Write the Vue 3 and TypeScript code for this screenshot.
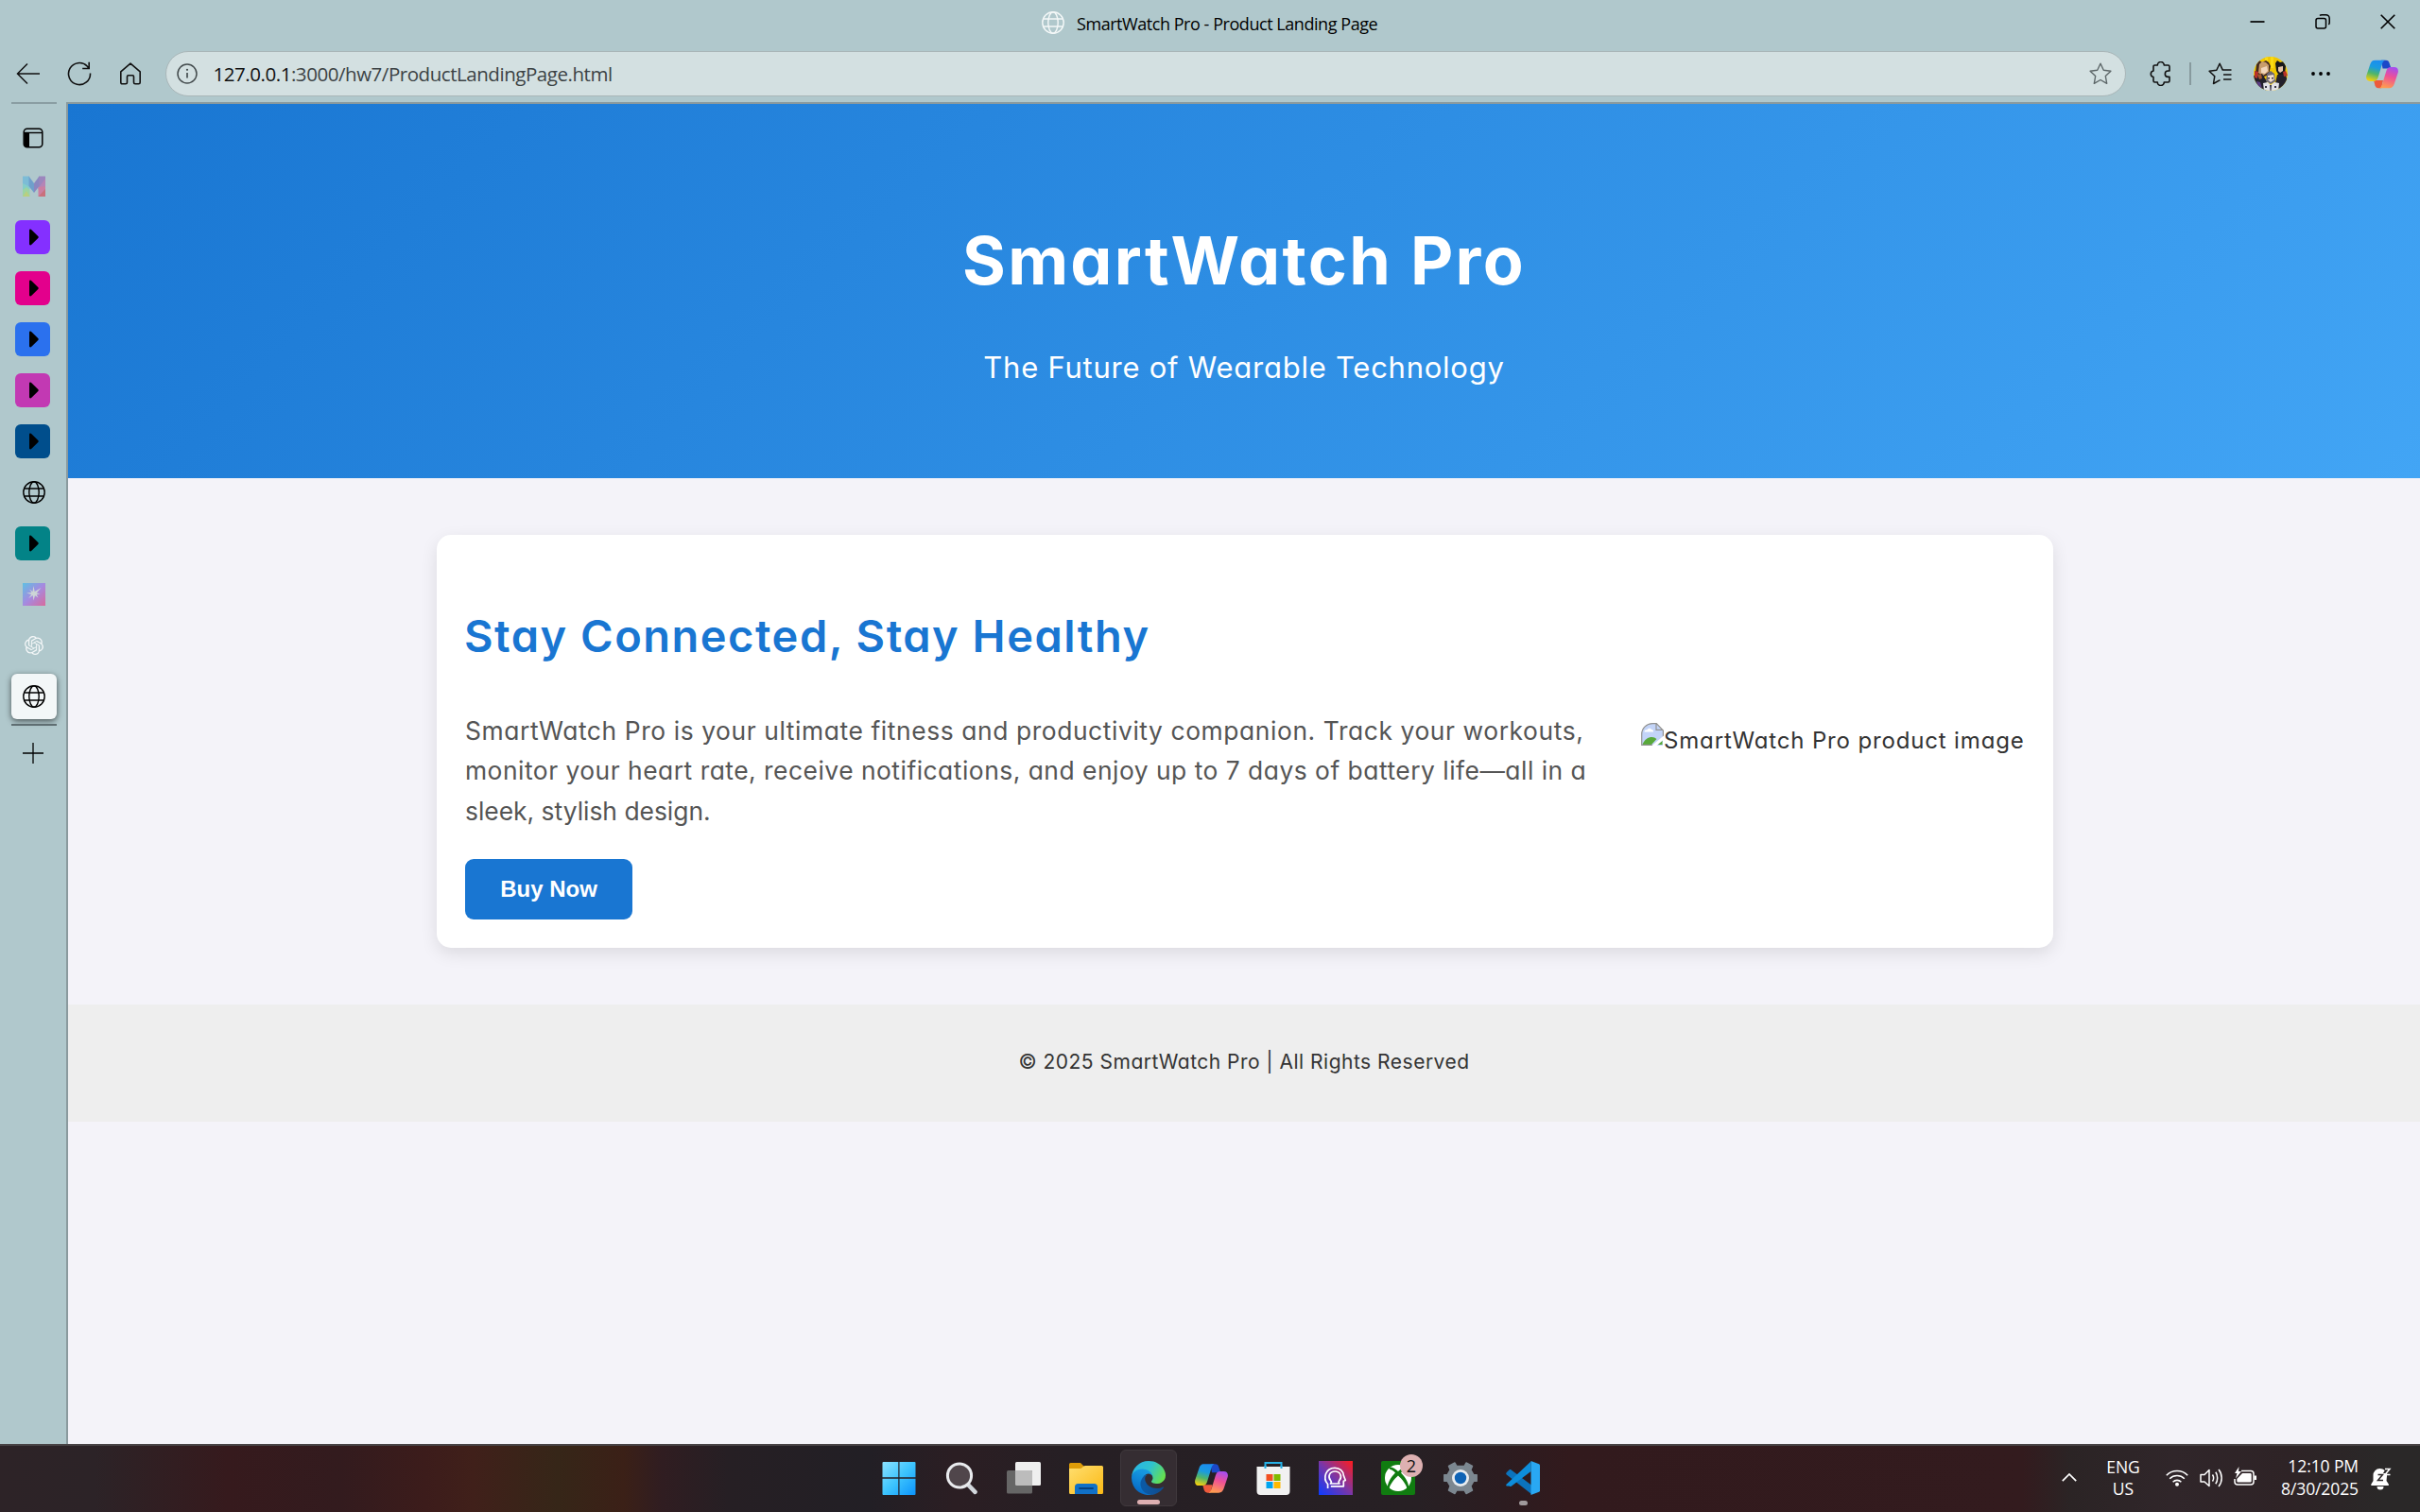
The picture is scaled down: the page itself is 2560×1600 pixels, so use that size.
<script setup lang="ts">
interface SideTab {
  kind: 'panel' | 'mosaic' | 'group' | 'globe' | 'spark' | 'knot' | 'active' | 'plus'
  color?: string
}

const sideTabs: SideTab[] = [
  { kind: 'panel' },
  { kind: 'mosaic' },
  { kind: 'group', color: '#8430ff' },
  { kind: 'group', color: '#e3008c' },
  { kind: 'group', color: '#2b71ee' },
  { kind: 'group', color: '#c239b3' },
  { kind: 'group', color: '#004e8c' },
  { kind: 'globe' },
  { kind: 'group', color: '#038387' },
  { kind: 'spark' },
  { kind: 'knot' },
  { kind: 'active' },
  { kind: 'plus' },
]
</script>

<template>
  <div class="screen">
    <svg class="defs" width="0" height="0" aria-hidden="true">
      <defs>
        <linearGradient id="cpL" x1="0.6" y1="0" x2="0.35" y2="1">
          <stop offset="0" stop-color="#1b8df0" />
          <stop offset="0.35" stop-color="#1a9be0" />
          <stop offset="0.65" stop-color="#4fb56a" />
          <stop offset="1" stop-color="#f2cf10" />
        </linearGradient>
        <linearGradient id="cpR" x1="0.7" y1="0" x2="0.4" y2="1">
          <stop offset="0" stop-color="#a44df0" />
          <stop offset="0.45" stop-color="#ee5096" />
          <stop offset="1" stop-color="#ff9b50" />
        </linearGradient>
        <symbol id="copilot" viewBox="0 0 34 30">
          <path fill="#1b48c8" d="M16 .3h5c2 0 3 1.2 3.600 3L26.500 9h-9z" />
          <path fill="#ee5a3c" d="M8 21.500h10l-2 8.200h-3c-2 0-3-1.200-3.600-3z" />
          <path fill="url(#cpL)" d="M9.500.3H20c-1.800.6-2.600 2.300-3.200 4.500L12.800 18c-.9 3-2.300 4.400-5 4.400H4.300c-3.200 0-4.900-2.200-4-6L4.300 4.500C5.200 1.800 6.700.3 9.500.3z" />
          <path fill="url(#cpR)" d="M24.500 29.700H14c1.800-.6 2.600-2.300 3.200-4.500L21.200 12c.9-3 2.300-4.400 5-4.400h3.500c3.200 0 4.900 2.200 4 6l-4 11.900c-.9 2.700-2.400 4.200-5.200 4.200z" />
        </symbol>
        <symbol id="globe" viewBox="0 0 24 24">
          <g fill="none" stroke="currentColor" stroke-width="1.400">
            <circle cx="12" cy="12" r="11.200" />
            <ellipse cx="12" cy="12" rx="5.200" ry="11.200" />
            <path d="M1.500 8h21M1.500 16h21" />
          </g>
        </symbol>
      </defs>
    </svg>

    <header class="titlebar">
      <div class="tab-title">
        <svg class="title-globe" width="24" height="24"><use href="#globe" /></svg>
        <span class="title-text">SmartWatch Pro - Product Landing Page</span>
      </div>
      <div class="window-buttons">
        <svg width="16" height="16" viewBox="0 0 16 16"><path d="M.5 8h15" stroke="#000" stroke-width="1.700" /></svg>
        <svg width="16" height="16" viewBox="0 0 16 16" fill="none" stroke="#000" stroke-width="1.500"><rect x="1" y="4.500" width="10.500" height="10.500" rx="2" /><path d="M5 1.600c.5-.6 1-.8 2-.8h4.500a3.700 3.700 0 0 1 3.700 3.700V9c0 1-.3 1.600-.9 2" /></svg>
        <svg width="16" height="16" viewBox="0 0 16 16"><path d="M.7.7l14.600 14.600M15.300.7.7 15.300" stroke="#000" stroke-width="1.600" /></svg>
      </div>
    </header>

    <nav class="toolbar">
      <svg class="back" width="26" height="24" viewBox="0 0 26 24" fill="none" stroke="#111" stroke-width="1.500"><path d="M25 12H1.500M12 1.500 1.500 12 12 22.500" /></svg>
      <svg class="reload" width="26" height="26" viewBox="0 0 26 26" fill="none" stroke="#111" stroke-width="1.600"><path d="M24.500 12.500A11.500 11.500 0 1 1 21.200 5l1.800 2.200M23.200.8v6.700h-7" /></svg>
      <svg class="home" width="24" height="24" viewBox="0 0 24 24" fill="none" stroke="#111" stroke-width="1.600" stroke-linejoin="round"><path d="M1.800 9.800 12 1.200l10.200 8.600v11.400c0 1-.6 1.600-1.600 1.600h-3.500c-1 0-1.600-.6-1.600-1.600V15c0-.8-.5-1.300-1.300-1.300h-4.400c-.8 0-1.300.5-1.300 1.300v6.200c0 1-.6 1.600-1.600 1.600H3.400c-1 0-1.600-.6-1.600-1.600z" /></svg>
      <div class="address">
        <svg width="22" height="22" viewBox="0 0 22 22" fill="none" stroke="#444c4e" stroke-width="1.500"><circle cx="11" cy="11" r="10" /><path d="M11 10v5.500" stroke-width="1.700" /><circle cx="11" cy="6.800" r="1.100" fill="#444c4e" stroke="none" /></svg>
        <span class="url"><b>127.0.0.1</b>:3000/hw7/ProductLandingPage.html</span>
        <svg width="24" height="24" viewBox="0 0 24 24" fill="none" stroke="#5d6769" stroke-width="1.400" stroke-linejoin="round"><path d="M12 1.200l3.300 7 7.600 1-5.600 5.300 1.400 7.800L12 18.500l-6.700 3.800 1.400-7.800L1.100 9.200l7.600-1z" /></svg>
      </div>
      <svg class="ext" width="24" height="26" viewBox="0 0 24 26" fill="none" stroke="#111" stroke-width="1.600" stroke-linejoin="round"><path d="M5.500 4h2.800a3.500 3.500 0 0 1 7 0h4.200a1.500 1.500 0 0 1 1.500 1.500V10h-1.500a3.200 3.200 0 0 0 0 6.400H21v4.100a1.500 1.500 0 0 1-1.500 1.500h-4.200a3.500 3.500 0 0 1-7 0H5.500A1.500 1.500 0 0 1 4 20.500v-4a3.300 3.300 0 0 1 0-6.500V5.500A1.500 1.500 0 0 1 5.500 4z" /></svg>
      <span class="sep"></span>
      <svg class="favs" width="25" height="24" viewBox="0 0 25 24" fill="none" stroke="#111" stroke-width="1.500" stroke-linejoin="round"><path d="M12.500 18.600 5.500 22.500l1.300-7.800L1.100 9.200l7.700-1 3.300-7 3.200 6.900h9.200M16 13h8.500M16 18h8.500" /></svg>
      <svg class="avatar" width="36" height="36" viewBox="0 0 36 36">
        <clipPath id="face"><circle cx="18" cy="18" r="18" /></clipPath>
        <g clip-path="url(#face)">
          <path fill="#f2c800" d="M0 0h36v36H0z" />
          <path fill="#fadb14" d="M12 0h3v9h-3zM18 0h3v12h-3z" />
          <path fill="#43291f" d="M3 8l3-4 3 2 4-2 3 2 2 4-2 9-7 3-7-5z" />
          <path fill="#c99d6c" d="M6 8l3-3 4 1 3 3 0 7-6 4-5-3z" />
          <path fill="#f2d6bb" d="M8 12l6-2 1 5-3 3-4-1z" />
          <path fill="#17181c" d="M23 7l2-3 3 2 4-1 2 5-1 8-5 4-4-7z" />
          <path fill="#e8c6ab" d="M26 11l5-1 0 5-3 2-2-2z" />
          <path fill="#23202b" d="M0 20l9-2 5 8-1 10H0zM25 19l9 0 2 8-8 9-5-8z" />
          <path fill="#b8322a" d="M1 15l4 1-1 7-3-1zM31 16l3-1 2 5-4 1z" />
          <path fill="#a4582e" d="M4 19l4-1 1 5-3 1z" />
          <path fill="#5a3d85" d="M3 26l4 1 2 7-4-1z" />
          <path fill="#6d6876" d="M14 18l4-3 4 3 1 8-5 3-5-3z" />
          <path fill="#f0dccd" d="M15 20l6-1 1 5-4 3-3-3z" />
          <path fill="#e2e1e7" d="M10 28l5-1 3 3 4-3 5 1-1 8H11z" />
          <path fill="#3a3745" d="M15 22h2v1.500h-2zM19 22h2v1.500h-2zM17 30h2l-.5 6h-1zM12 31h2v2h-2zM22 31h2v2h-2z" />
        </g>
      </svg>
      <svg class="more" width="20" height="6" viewBox="0 0 20 6"><circle cx="2" cy="3" r="1.900" /><circle cx="10" cy="3" r="1.900" /><circle cx="18" cy="3" r="1.900" /></svg>
      <svg class="cp" width="34" height="31"><use href="#copilot" /></svg>
    </nav>

    <div class="middle">
      <aside class="sidebar">
        <div class="side-divider"></div>
        <div v-for="(tab, i) in sideTabs" :key="i" class="side-tab" :class="tab.kind">
          <svg v-if="tab.kind === 'panel'" width="22" height="22" viewBox="0 0 22 22"><path d="M2 5h5v16H4a2 2 0 0 1-2-2z" /><rect x="1.200" y="1.200" width="19.600" height="19.600" rx="3.500" fill="none" stroke="#000" stroke-width="1.500" /><path d="M1 5.500h20" stroke="#000" stroke-width="1.400" /></svg>
          <svg v-else-if="tab.kind === 'mosaic'" width="24" height="22" viewBox="0 0 24 22">
            <path fill="#7cbcd6" d="M0 .5h7l1 10-1 4-7-3z" /><path fill="#84cdc9" d="M0 8l8 4-1 3-7 2z" /><path fill="#9bd3a3" d="M0 22V15l4-3 3.500 3v7z" /><path fill="#b9cf7f" d="M0 22l4-6 3.500 6z" />
            <path fill="#9c86bd" d="M17 .5h7v8l-7.500 6z" /><path fill="#b585b6" d="M24 3v11l-7.500-1z" /><path fill="#cb7fa2" d="M16.500 12 24 11v7l-7.500 4z" /><path fill="#c9707c" d="M16.500 22 24 14v8z" />
            <path fill="#6f9fcb" d="M6.500.5 12 8v10L6.500 11z" /><path fill="#8b87bf" d="M17.500.5 12 8v10l5.500-7z" />
          </svg>
          <span v-else-if="tab.kind === 'group'" class="swatch" :style="{ background: tab.color }">
            <svg width="10" height="18" viewBox="0 0 10 18"><path d="M0 2C0 .4 1.400.1 2.400 1.200L9.300 8c.6.6.6 1.400 0 2l-6.900 6.800C1.400 17.900 0 17.600 0 16z" /></svg>
          </span>
          <svg v-else-if="tab.kind === 'globe' || tab.kind === 'active'" width="24" height="24"><use href="#globe" /></svg>
          <svg v-else-if="tab.kind === 'spark'" width="24" height="24" viewBox="0 0 24 24">
            <linearGradient id="spk" x1="0" y1="0" x2="1" y2="1"><stop offset="0" stop-color="#5fc0e2" /><stop offset="0.5" stop-color="#a58ae0" /><stop offset="1" stop-color="#d86a9c" /></linearGradient>
            <path fill="url(#spk)" d="M0 0h24v24H0z" />
            <path fill="#ccd5d6" d="M11.500 3l1.200 6L19.500 5l-4.800 5.600 3.800.7-3.800 1 1.800 3.200-3.500-2.200L11.500 18.500l-.8-5.500-4.500 3.300 3-4.300L4 10.600l5.500-.6L7 6.500l3.500 2.500z" />
          </svg>
          <svg v-else-if="tab.kind === 'knot'" width="20" height="20" viewBox="0 0 24 24"><path fill="#f4f7f8" d="M22.2819 9.8211a5.9847 5.9847 0 0 0-.5157-4.9108 6.0462 6.0462 0 0 0-6.5098-2.9A6.0651 6.0651 0 0 0 4.9807 4.1818a5.9847 5.9847 0 0 0-3.9977 2.9 6.0462 6.0462 0 0 0 .7427 7.0966 5.98 5.98 0 0 0 .511 4.9107 6.051 6.051 0 0 0 6.5146 2.9001A5.9847 5.9847 0 0 0 13.2599 24a6.0557 6.0557 0 0 0 5.7718-4.2058 5.9894 5.9894 0 0 0 3.9977-2.9001 6.0557 6.0557 0 0 0-.7475-7.0729zm-9.022 12.6081a4.4755 4.4755 0 0 1-2.8764-1.0408l.1419-.0804 4.7783-2.7582a.7948.7948 0 0 0 .3927-.6813v-6.7369l2.02 1.1686a.071.071 0 0 1 .038.052v5.5826a4.504 4.504 0 0 1-4.4945 4.4944zm-9.6607-4.1254a4.4708 4.4708 0 0 1-.5346-3.0137l.142.0852 4.783 2.7582a.7712.7712 0 0 0 .7806 0l5.8428-3.3685v2.3324a.0804.0804 0 0 1-.0332.0615L9.74 19.9502a4.4992 4.4992 0 0 1-6.1408-1.6464zM2.3408 7.8956a4.485 4.485 0 0 1 2.3655-1.9728V11.6a.7664.7664 0 0 0 .3879.6765l5.8144 3.3543-2.0201 1.1685a.0757.0757 0 0 1-.071 0l-4.8303-2.7865A4.504 4.504 0 0 1 2.3408 7.872zm16.5963 3.8558L13.1038 8.364 15.1192 7.2a.0757.0757 0 0 1 .071 0l4.8303 2.7913a4.4944 4.4944 0 0 1-.6765 8.1042v-5.6772a.79.79 0 0 0-.407-.667zm2.0107-3.0231l-.142-.0852-4.7735-2.7818a.7759.7759 0 0 0-.7854 0L9.409 9.2297V6.8974a.0662.0662 0 0 1 .0284-.0615l4.8303-2.7866a4.4992 4.4992 0 0 1 6.6802 4.66zM8.3065 12.863l-2.02-1.1638a.0804.0804 0 0 1-.038-.0567V6.0742a4.4992 4.4992 0 0 1 7.3757-3.4537l-.142.0805L8.704 5.459a.7948.7948 0 0 0-.3927.6813zm1.0976-2.3654l2.602-1.4998 2.6069 1.4998v2.9994l-2.5974 1.4997-2.6067-1.4997Z" /></svg>
          <svg v-else width="22" height="22" viewBox="0 0 22 22"><path d="M11 0v22M0 11h22" stroke="#000" stroke-width="1.300" /></svg>
        </div>
      </aside>

      <main class="page">
        <section class="hero">
          <h1>SmartWatch Pro</h1>
          <p>The Future of Wearable Technology</p>
        </section>
        <section class="card">
          <div class="info">
            <h2>Stay Connected, Stay Healthy</h2>
            <p class="copy">
              <span class="line-a">SmartWatch Pro is your ultimate fitness and productivity companion. Track your workouts,</span><br />
              <span class="line-b">monitor your heart rate, receive notifications, and enjoy up to 7 days of battery life—all in a</span><br />
              <span>sleek, stylish design.</span>
            </p>
            <button type="button">Buy Now</button>
          </div>
          <div class="product">
            <svg width="24" height="24" viewBox="0 0 24 24">
              <path fill="#c3d4f8" d="M1 24V11C1 5 6 1 12 .7h4L23 8v16z" />
              <path fill="#fff" d="M3.500 9.500c0-1.500 1.500-2.500 2.800-2C7 5.300 10 5 11 7c1.500-.2 2.300 1 2 2.500z" />
              <path fill="#58a93a" d="M1.500 23c2-5.500 6-8 10-8 2 0 3.500.7 5 2L11 23zM17.500 23l5-4.500V23z" />
              <path fill="none" stroke="#929292" stroke-width="1.200" d="M.7 24V12C.7 5.500 6 .8 12 .6h4.300L23.400 8v8M.7 23.400H12M16 .6V7.400h7" />
              <path fill="#fff" d="M11.500 24 24 13.500v4L16.500 24z" />
            </svg>
            <span>SmartWatch Pro product image</span>
          </div>
        </section>
        <footer>© 2025 SmartWatch Pro | All Rights Reserved</footer>
      </main>
    </div>

    <footer class="taskbar">
      <div class="apps">
        <span class="app">
          <svg width="36" height="36" viewBox="0 0 36 36"><linearGradient id="win" x1="0" y1="0" x2="1" y2="1"><stop offset="0" stop-color="#8be2ff" /><stop offset=".5" stop-color="#3dc4fd" /><stop offset="1" stop-color="#0c93fb" /></linearGradient><path fill="url(#win)" d="M1.500 1H17.300v16.300H.5V2a1 1 0 0 1 1-1zM18.500 1H34.500a1 1 0 0 1 1 1v15.300H18.500zM.5 18.700H17.300V36H1.500a1 1 0 0 1-1-1zM18.500 18.700h17V35a1 1 0 0 1-1 1h-16z" /></svg>
        </span>
        <span class="app">
          <svg width="36" height="36" viewBox="0 0 36 36"><path d="M25 25l7.500 7.800" stroke="#d2d7dc" stroke-width="4.600" stroke-linecap="round" /><circle cx="16" cy="15.500" r="12.600" fill="#50464b" stroke="#e9ebee" stroke-width="3" /></svg>
        </span>
        <span class="app">
          <svg width="36" height="36" viewBox="0 0 36 36"><rect x="9" y="1" width="27" height="25" rx="1.500" fill="#efefef" /><rect x="0" y="10" width="27" height="24.500" rx="1.500" fill="#666" /><path fill="#bcbcbc" d="M9 10h16.500a1.500 1.500 0 0 1 1.500 1.500V26H10.500A1.500 1.500 0 0 1 9 24.500z" /></svg>
        </span>
        <span class="app">
          <svg width="36" height="36" viewBox="0 0 36 36"><linearGradient id="fol" x1="0" y1="0" x2="1" y2="1"><stop offset="0" stop-color="#ffdf70" /><stop offset="1" stop-color="#fbb915" /></linearGradient><path fill="#dd9c08" d="M0 3.500A1.500 1.500 0 0 1 1.500 2H12l4 4-4 5H0z" /><path fill="url(#fol)" d="M0 8h12c2 0 2.500-3 5-3h17.500A1.500 1.500 0 0 1 36 6.500v27a1.500 1.500 0 0 1-1.500 1.500h-33A1.500 1.500 0 0 1 0 33.500z" /><path fill="#1171c8" d="M6 35v-7.500A3.500 3.500 0 0 1 9.500 24h17a3.500 3.500 0 0 1 3.500 3.500V35z" /><path stroke="#07417f" stroke-width="1.800" stroke-linecap="round" d="M11 29h14" /></svg>
        </span>
        <span class="app current">
          <svg width="36" height="36" viewBox="0 0 256 256">
            <linearGradient id="e1" x1="0.2" y1="0" x2="1" y2="0"><stop offset="0" stop-color="#0c59a4" /><stop offset="1" stop-color="#114a8b" /></linearGradient>
            <linearGradient id="e2" x1="0.8" y1="0" x2="0.4" y2="1"><stop offset="0" stop-color="#1b9de2" /><stop offset="0.3" stop-color="#1595df" /><stop offset="1" stop-color="#0667c4" /></linearGradient>
            <linearGradient id="e3" x1="0" y1="0.2" x2="1" y2="0.600"><stop offset="0" stop-color="#28b5e6" /><stop offset="0.5" stop-color="#2fc2cf" /><stop offset="1" stop-color="#66e04d" /></linearGradient>
            <path fill="url(#e1)" d="M235.680 195.460a93.730 93.730 0 0 1-10.540 4.710 101.870 101.870 0 0 1-35.900 6.460c-47.320 0-88.540-32.550-88.540-74.320A31.480 31.480 0 0 1 117.130 105c-42.800 1.800-53.800 46.400-53.800 72.530 0 73.880 68.090 77.370 82.760 77.370 7.910 0 19.840-2.300 27-4.560l1.310-.44a128.340 128.340 0 0 0 66.600-48.800 4 4 0 0 0-5.320-5.640z" />
            <path fill="url(#e2)" d="M105.730 241.420A79.200 79.200 0 0 1 83 220.080a80.720 80.720 0 0 1 29.500-120c3.120-1.470 8.450-4.130 15.540-4a32.350 32.350 0 0 1 25.690 13 31.880 31.880 0 0 1 6.360 18.660c0-.21 24.460-79.600-80-79.600-43.900 0-80 41.660-80 78.210a130.150 130.150 0 0 0 12.110 56 128 128 0 0 0 156.380 67.110 75.550 75.550 0 0 1-62.780-8z" />
            <path fill="url(#e3)" d="M152.290 148.860c-.81 1.050-3.300 2.500-3.300 5.660 0 2.610 1.700 5.120 4.720 7.230 14.380 10 41.490 8.680 41.560 8.680a59.560 59.560 0 0 0 30.270-8.350A61.380 61.380 0 0 0 256 109.170c.26-22.410-8-37.310-11.340-43.910C223.460 23.790 177.720 0 128 0A128 128 0 0 0 0 126.200c.48-36.540 36.800-66.050 80-66.050 3.500 0 23.460.34 42 10.070 16.340 8.580 24.900 18.940 30.850 29.210 6.180 10.670 7.280 24.150 7.280 29.520s-2.740 13.330-7.840 19.910z" />
          </svg>
        </span>
        <span class="app"><svg width="35" height="31"><use href="#copilot" /></svg></span>
        <span class="app">
          <svg width="36" height="36" viewBox="0 0 36 36"><path fill="none" stroke="#27b1e6" stroke-width="2" d="M9.500 8V2h17v6" /><path fill="#f1f1f1" d="M.5 6h35v26a4 4 0 0 1-4 4h-27a4 4 0 0 1-4-4z" /><path stroke="#27b1e6" stroke-width="2" d="M9.500 5v3M26.500 5v3" /><path fill="#f25022" d="M10.500 14h7v7h-7z" /><path fill="#7fba00" d="M18.500 14h7v7h-7z" /><path fill="#00a4ef" d="M10.500 22h7v7h-7z" /><path fill="#ffb900" d="M18.500 22h7v7h-7z" /></svg>
        </span>
        <span class="app">
          <svg width="36" height="36" viewBox="0 0 36 36"><linearGradient id="hd" x1="0" y1="1" x2="1" y2="0"><stop offset="0" stop-color="#0b3cff" /><stop offset=".5" stop-color="#7b36a6" /><stop offset="1" stop-color="#ff1c1c" /></linearGradient><path fill="url(#hd)" d="M0 0h36v36H0z" /><g fill="none" stroke="#fff" stroke-width="1.700" stroke-linejoin="round"><path d="M9.600 29v-4.500C3.800 18 7.500 7.300 17 7.300c5.500 0 9 3.500 9.300 8l2 5.200-2 .7v5.600H12.800" /><path d="M12.500 24c1.500-1.200 1-2.200 0-3.500-3.200-4-1-9.500 4.700-9.500s8 5.500 4.700 9.500c-1 1.300-1.200 2.300 0 3.500z" /></g></svg>
        </span>
        <span class="app">
          <svg width="36" height="36" viewBox="0 0 36 36"><rect width="36" height="36" rx="2" fill="#107c10" /><circle cx="18" cy="18" r="14" fill="#fff" /><path fill="#107c10" d="M7.500 6.500C11 5.500 15 8.500 18 11c3-2.500 7-5.500 10.500-4.500l-2 2.500c-1.500 0-3.500 1.500-5.500 3.500 4 4 9 11 8 16.500l-1.500 1C27 25 22 19 18 15.500 14 19 9 25 8.500 30L7 29c-1-5.500 4-12.500 8-16.500-2-2-4-3.500-5.500-3.500z" /></svg>
          <em class="badge">2</em>
        </span>
        <span class="app">
          <svg width="36" height="36" viewBox="0 0 36 36"><path fill="#7c8790" stroke="#7c8790" stroke-width="1.500" stroke-linejoin="round" d="M12 2l2 3.500h8L24 2l6.500 3.500L28.800 9.500l3.200 5.300h3.200v6.400H32l-3.200 5.300L30.500 31 24 34.500 22 31h-8l-2 3.500L5.500 31l1.700-4.500L4 21.200H.8v-6.400H4l3.200-5.300L5.500 5.500z" /><circle cx="18" cy="18" r="9" fill="#e9ecef" /><circle cx="18" cy="18" r="6.200" fill="#0f63b5" /></svg>
        </span>
        <span class="app running">
          <svg width="36" height="36" viewBox="0 0 36 36"><path fill="#0b73bd" d="M.8 12 3.500 9.500c.7-.6 1.500-.6 2.200-.1L27 25.500V35L.8 14.500c-.8-.7-.8-1.700 0-2.500z" /><path fill="#0d8ddb" d="M.8 24.500 26.500.5V11L5.700 26.700c-.7.5-1.500.5-2.200-.1L.8 26.500c-.8-.7-.8-1.300 0-2z" /><path fill="#29a8f3" d="M26.500 0 35 3.300c.7.3 1 .8 1 1.500v26.400c0 .7-.3 1.200-1 1.500L26.500 36z" /></svg>
        </span>
      </div>
      <div class="tray">
        <svg class="chev" width="16" height="9" viewBox="0 0 16 9"><path d="M.8 8.200 8 1l7.200 7.200" fill="none" stroke="#fff" stroke-width="1.700" /></svg>
        <div class="lang">ENG<br />US</div>
        <svg class="wifi" width="24" height="18" viewBox="0 0 24 18" fill="none" stroke="#fff" stroke-width="1.600"><path d="M.8 6.200a15.800 15.800 0 0 1 22.400 0M4.200 9.800a11 11 0 0 1 15.600 0M7.600 13.200a6.200 6.200 0 0 1 8.800 0" /><circle cx="12" cy="15.800" r="2" fill="#fff" stroke="none" /></svg>
        <svg class="vol" width="24" height="20" viewBox="0 0 24 20" fill="none" stroke="#fff" stroke-width="1.500" stroke-linejoin="round"><path d="M10 1.500v17L5 14H1V6.500h4zM13.500 6.500c1.300 2 1.300 5 0 7M16.800 3.800c2.500 3.500 2.500 9 0 12.500M20 1c4.200 5 4.200 13 0 18" /></svg>
        <svg class="bat" width="24" height="20" viewBox="0 0 24 20"><path fill="none" stroke="#fff" stroke-width="1.500" d="M8 4.500h10a3 3 0 0 1 3 3V16a3 3 0 0 1-3 3H4a3 3 0 0 1-3-3v-3" /><path fill="#fff" d="M9 7h8.500A1.200 1.200 0 0 1 18.700 8.200v7.100a1.200 1.200 0 0 1-1.200 1.200H4.500a1.200 1.200 0 0 1-1.200-1.200V13zM21.500 9.500H24v4.500h-2.500zM5.500 0 1 7h2.500L2 12.500 8 5H5z" /></svg>
        <div class="clock">12:10 PM<br />8/30/2025</div>
        <svg class="bell" width="22" height="24" viewBox="0 0 22 24"><path fill="#fff" d="M9.500 1c2 0 4 .7 5.200 2L13 6h4v3l-.5 5 2.300 3.600c.4.700.1 1.400-.6 1.400H1c-.8 0-1.100-.8-.6-1.400L2.500 14V8.500A7.200 7.200 0 0 1 9.500 1zM6.500 20h7a3.500 3.500 0 0 1-7 0z" /><path fill="none" stroke="#2b2627" stroke-width="1.500" d="M7.500 7.500h5L7.500 13.500H13" /><path fill="none" stroke="#fff" stroke-width="1.500" d="M15 1.500h5L15 7.500h5.500" /></svg>
      </div>
    </footer>
  </div>
</template>

<style>
html,
body {
  margin: 0;
  overflow: hidden;
}
</style>

<style scoped>
* {
  box-sizing: border-box;
}
.screen {
  width: 2560px;
  height: 1600px;
  display: flex;
  flex-direction: column;
  background: #b0c8cc;
  font-family: 'Open Sans', 'Noto Sans', sans-serif;
  overflow: hidden;
}
.defs {
  position: absolute;
}
svg {
  display: block;
  flex: none;
}
.titlebar {
  height: 54px;
  flex: none;
  display: flex;
  align-items: flex-start;
}
.tab-title {
  display: flex;
  align-items: center;
  margin: 12px 0 0 1102px;
  height: 24px;
  width: 1278px;
}
.title-globe {
  color: #f4f8f8;
}
.title-text {
  font-size: 18px;
  line-height: 24px;
  margin: 1px 0 0 13px;
  letter-spacing: -0.450px;
  white-space: nowrap;
}
.window-buttons {
  display: flex;
  gap: 53px;
  margin-top: 15px;
}
.toolbar {
  height: 54px;
  flex: none;
  display: flex;
  align-items: center;
  padding: 0 0 6px 17px;
}
.reload {
  margin-left: 28px;
}
.home {
  margin-left: 29px;
}
.address {
  width: 2074.500px;
  height: 48px;
  margin-left: 24.500px;
  display: flex;
  align-items: center;
  padding: 0 14px 0 11px;
  border: 1.500px solid #a9b6b8;
  border-radius: 24px;
  background: #d3e0e1;
}
.url {
  margin-left: 17px;
  font-size: 20.500px;
  line-height: 30px;
  letter-spacing: -0.450px;
  color: #3c4345;
  flex: 1;
  white-space: nowrap;
}
.url b {
  font-weight: 400;
  color: #111;
}
.ext {
  margin-left: 25px;
}
.sep {
  width: 1.500px;
  height: 24px;
  margin-left: 18px;
  background: #879a9e;
}
.favs {
  margin-left: 18px;
}
.avatar {
  margin-left: 23px;
}
.more {
  margin-left: 25.500px;
}
.cp {
  margin-left: 38px;
}
.middle {
  flex: 1;
  min-height: 0;
  display: flex;
}
.sidebar {
  width: 72px;
  flex: none;
  border-right: 2px solid #8a9a9e;
  display: flex;
  flex-direction: column;
  align-items: center;
}
.side-divider {
  width: 48px;
  height: 2px;
  margin: 0 0 12px 2px;
  flex: none;
  background: #8a9ea3;
}
.side-tab {
  height: 54px;
  width: 70px;
  flex: none;
  display: flex;
  align-items: center;
  justify-content: center;
  padding-left: 2px;
}
.side-tab.panel {
  height: 48px;
  padding-left: 0;
}
.swatch {
  width: 37px;
  height: 36px;
  margin-right: 3px;
  border-radius: 6px;
  display: flex;
  align-items: center;
  justify-content: center;
  padding-left: 2px;
}
.side-tab.active {
  position: relative;
  width: 48px;
  height: 48px;
  margin: 3px 0 3px 2px;
  padding: 0;
  border-radius: 6px;
  background: #f3f7f8;
  box-shadow: 0 2px 6px rgba(0, 0, 0, 0.6);
}
.side-tab.active::after {
  content: '';
  position: absolute;
  left: 0;
  top: 53px;
  width: 48px;
  height: 2px;
  background: #5f6e72;
}
.side-tab.plus {
  margin-top: 6px;
  padding-left: 0;
}
.page {
  flex: 1;
  background: #f4f3f9;
  border-top: 2px solid #8a9a9e;
  font-family: Inter, 'Open Sans', sans-serif;
  font-feature-settings: 'cv11';
  color: #333;
}
.hero {
  height: 396px;
  padding-top: 115px;
  background: linear-gradient(135deg, #1976d2, #42a5f5);
  color: #fff;
  text-align: center;
}
h1 {
  margin: 0;
  font-size: 70px;
  line-height: 101px;
  font-weight: 700;
  letter-spacing: 2.300px;
}
.hero p {
  margin: 38px 0 0;
  font-size: 31px;
  line-height: 50px;
  letter-spacing: 0.750px;
}
.card {
  width: 1710px;
  height: 437px;
  margin: 60px 0 60px 390px;
  padding: 30px;
  display: flex;
  align-items: center;
  border-radius: 15px;
  background: #fff;
  box-shadow: 0 6px 18px rgba(0, 0, 0, 0.1);
}
.info {
  width: 1244px;
  flex: none;
}
h2 {
  margin: 39px 0 41px -1px;
  font-size: 47px;
  line-height: 76px;
  font-weight: 600;
  letter-spacing: 1.500px;
  color: #1976d2;
}
.copy {
  margin: 0 0 30px;
  font-size: 26.400px;
  line-height: 42.240px;
  color: #555;
  white-space: nowrap;
}
.line-a {
  letter-spacing: 0.590px;
}
.line-b {
  letter-spacing: 0.500px;
}
button {
  display: block;
  width: 177px;
  height: 64px;
  padding: 0;
  border: 0;
  border-radius: 9px;
  background: #1976d2;
  color: #fff;
  font: bold 24px 'Liberation Sans', Arial, sans-serif;
}
.product {
  display: flex;
  align-items: flex-start;
  height: 39px;
  font-size: 24px;
  line-height: 38px;
  letter-spacing: 0.850px;
  white-space: nowrap;
}
footer {
  flex: none;
}
.page footer {
  height: 124px;
  background: #eee;
  text-align: center;
  font-size: 21px;
  line-height: 121px;
  letter-spacing: 0.500px;
}
.taskbar {
  height: 72px;
  display: flex;
  border-top: 2px solid #484345;
  background: linear-gradient(90deg, #2d2327 0, #2c2327 100px, #361a1d 240px, #331b1e 360px, #3c1c1b 450px, #40201a 500px, #362618 590px, #3b2017 660px, #301d21 700px, #261f24 770px, #221f25 920px, #2b1e23 1010px, #261f24 1130px, #272024 1500px, #2c1c20 1590px, #321a1d 1660px, #331b1e 2140px, #2b2425 2190px, #30262a 2300px, #2e2326 2420px, #2a2828 2520px, #2a2828 2560px);
}
.apps {
  display: flex;
  margin-left: 918px;
  width: 726px;
  padding-top: 4px;
}
.app {
  position: relative;
  width: 60px;
  height: 60px;
  margin: 0 3px;
  display: flex;
  align-items: center;
  justify-content: center;
}
.current {
  background: #352d32;
  border: 1.500px solid #40393d;
  border-radius: 6px;
}
.current::after,
.running::after {
  content: '';
  position: absolute;
  bottom: 1px;
  left: 17px;
  width: 24px;
  height: 5px;
  border-radius: 3px;
  background: #ddafb1;
}
.running::after {
  left: 26px;
  width: 9px;
  background: #a09a9c;
}
.badge {
  position: absolute;
  left: 32px;
  top: 5px;
  width: 24px;
  height: 24px;
  border-radius: 12px;
  background: #ddb0b1;
  color: #111;
  font: 18px/24px 'Open Sans', sans-serif;
  text-align: center;
}
.tray {
  display: flex;
  color: #fff;
  font-size: 17.500px;
  line-height: 24px;
  white-space: nowrap;
}
.chev {
  margin: 29px 0 0 537px;
}
.lang {
  width: 50px;
  margin: 11px 0 0 24px;
  text-align: center;
  line-height: 23px;
}
.wifi {
  margin: 25px 0 0 20px;
}
.vol {
  margin: 24px 0 0 12px;
}
.bat {
  margin: 22px 0 0 12px;
}
.clock {
  width: 90px;
  margin: 9px 0 0 18px;
  text-align: right;
  letter-spacing: -0.100px;
}
.bell {
  margin: 23px 0 0 13px;
}
</style>
